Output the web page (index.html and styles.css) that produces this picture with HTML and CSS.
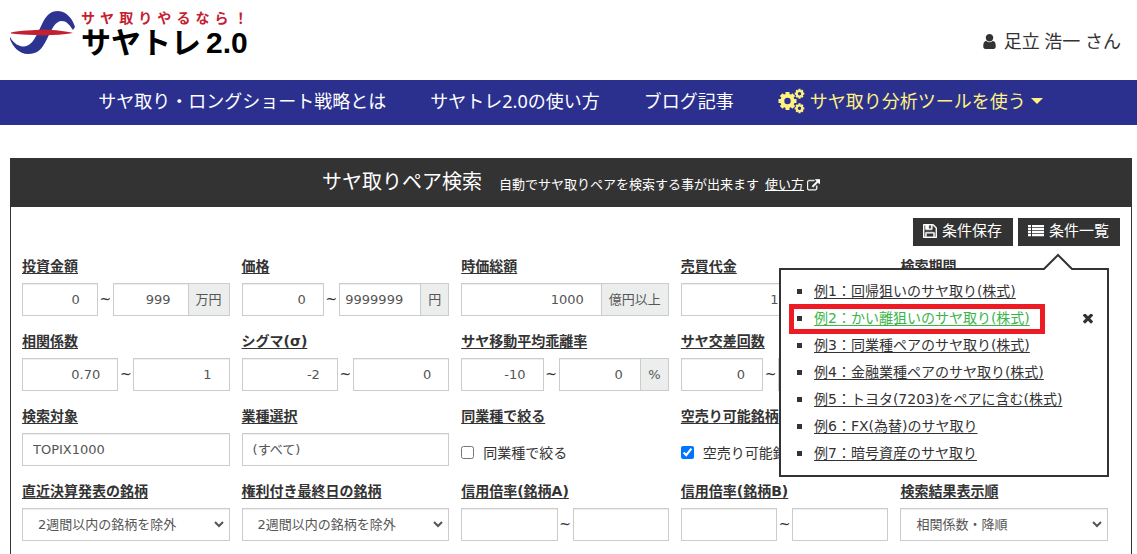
FILE: index.html
```html
<!DOCTYPE html>
<html lang="ja">
<head>
<meta charset="utf-8">
<meta name="viewport" content="width=device-width, initial-scale=1">
<title>サヤトレ2.0</title>
<link rel="stylesheet" href="styles.css">
</head>
<body>
<header class="site-header">
  <a class="logo" href="#">
    <svg class="logo-mark" viewBox="0 0 66 46" aria-hidden="true">
      <path fill="#2d3490" d="M0 27C4 34 9 36.500 14 36.500C23 36.500 28 22 33 12C37 4 42 1 48 1C57 1 63 10 65 17L63 20C59 14 56 11 52 11C45 11 42 19 37 29C32 39 28 44 18 44C9 44 3 37 0 29Z"/>
      <path fill="#c32032" d="M1 22.500C10 20.500 24 20 34 19.500C45 20 56 21 63 23C54 24.500 44 25 34 25.500C22 25 11 24.500 1 23.500Z"/>
    </svg>
    <span class="logo-text">
      <span class="logo-tagline"><span>サ</span><span>ヤ</span><span>取</span><span>り</span><span>や</span><span>る</span><span>な</span><span>ら</span><span>！</span></span>
      <span class="logo-name">サヤトレ<span class="logo-version">2.0</span></span>
    </span>
  </a>
  <div class="user">
    <svg class="icon-user" viewBox="256 128 1280 1536" aria-hidden="true"><path fill="currentColor" d="M1536 1399q0 109-62.500 187t-150.500 78h-854q-88 0-150.500-78t-62.500-187q0-85 8.500-160.500t31.500-152 58.500-131 94-89 134.500-34.500q131 128 313 128t313-128q76 0 134.500 34.500t94 89 58.500 131 31.500 152 8.500 160.500zm-256-887q0 159-112.500 271.500t-271.500 112.500-271.500-112.500-112.500-271.500 112.500-271.500 271.500-112.500 271.500 112.500 112.500 271.500z"/></svg>
    <span>足立 浩一 さん</span>
  </div>
</header>

<nav class="main-nav">
  <a href="#">サヤ取り・ロングショート戦略とは</a>
  <a href="#">サヤトレ2.0の使い方</a>
  <a href="#">ブログ記事</a>
  <a class="nav-tools" href="#">
    <svg class="icon-cogs" viewBox="0 0 27 26" aria-hidden="true">
      <g fill="none" stroke="currentColor">
        <circle cx="9.500" cy="13" r="5.200" stroke-width="4"/>
        <path stroke-width="4" d="M9.500 4v3M9.500 19v3M.5 13h3M15.500 13h3M3.200 6.700l2 2M13.800 17.300l2 2M3.200 19.300l2-2M13.800 8.700l2-2"/>
        <circle cx="21.500" cy="5.700" r="2.700" stroke-width="2"/>
        <path stroke-width="2.200" d="M21.500.7v2M21.500 8.700v2M16.700 5.700h2M24.300 5.700h2M18.200 2.300l1.200 1.200M23.600 7.900l1.200 1.200M18.200 9.100l1.200-1.200M23.600 3.500l1.200-1.200"/>
        <circle cx="21.500" cy="20.300" r="2.700" stroke-width="2"/>
        <path stroke-width="2.200" d="M21.500 15.300v2M21.500 23.300v2M16.700 20.300h2M24.300 20.300h2M18.200 16.900l1.200 1.200M23.600 22.500l1.200 1.200M18.200 23.700l1.200-1.200M23.600 18.100l1.200-1.200"/>
      </g>
    </svg>
    <span>サヤ取り分析ツールを使う</span>
    <span class="caret"></span>
  </a>
</nav>

<main class="panel">
  <div class="panel-head">
    <h1>サヤ取りペア検索</h1>
    <p>自動でサヤ取りペアを検索する事が出来ます</p>
    <a href="#"><span class="help-text">使い方</span><svg class="icon-external" viewBox="0 0 1792 1600" aria-hidden="true"><path fill="currentColor" stroke="currentColor" stroke-width="60" d="M1408 928v320q0 119-84.500 203.500t-203.500 84.500h-832q-119 0-203.500-84.500t-84.500-203.500v-832q0-119 84.500-203.500t203.500-84.500h704q14 0 23 9t9 23v64q0 14-9 23t-23 9h-704q-66 0-113 47t-47 113v832q0 66 47 113t113 47h832q66 0 113-47t47-113v-320q0-14 9-23t23-9h64q14 0 23 9t9 23zm384-864v512q0 26-19 45t-45 19-45-19l-176-176-652 652q-10 10-23 10t-23-10l-114-114q-10-10-10-23t10-23l652-652-176-176q-19-19-19-45t19-45 45-19h512q26 0 45 19t19 45z"/></svg></a>
  </div>

  <div class="toolbar">
    <button type="button" class="tool-button">
      <svg class="icon-save" viewBox="128 128 1536 1536" aria-hidden="true"><path fill="currentColor" stroke="currentColor" stroke-width="50" d="M512 1536h768v-384h-768v384zm896 0h128v-896q0-14-10-38.500t-20-34.500l-281-281q-10-10-34-20t-39-10v416q0 40-28 68t-68 28h-576q-40 0-68-28t-28-68v-416h-128v1280h128v-416q0-40 28-68t68-28h832q40 0 68 28t28 68v416zm-384-928v-320q0-13-9.500-22.500t-22.500-9.500h-192q-13 0-22.500 9.500t-9.500 22.500v320q0 13 9.500 22.500t22.500 9.500h192q13 0 22.500-9.500t9.500-22.500zm640 32v928q0 40-28 68t-68 28h-1344q-40 0-68-28t-28-68v-1344q0-40 28-68t68-28h928q40 0 88 20t76 48l280 280q28 28 48 76t20 88z"/></svg>
      条件保存
    </button>
    <button type="button" class="tool-button">
      <svg class="icon-list" viewBox="0 0 16 12" aria-hidden="true"><path fill="currentColor" d="M0 0h3v2.300H0zM4 0h12v2.300H4zM0 3h3v2.300H0zM4 3h12v2.300H4zM0 6h3v2.300H0zM4 6h12v2.300H4zM0 9h3v2.300H0zM4 9h12v2.300H4z"/></svg>
      条件一覧
    </button>
    <div class="popover">
      <svg class="popover-arrow" viewBox="0 0 30 17" aria-hidden="true"><path fill="#fff" stroke="#333" stroke-width="2" d="M0 17L15 2L30 17"/></svg>
      <ul class="presets">
        <li><a href="#">例1：回帰狙いのサヤ取り(株式)</a></li>
        <li class="is-marked"><a href="#">例2：かい離狙いのサヤ取り(株式)</a><button type="button" class="remove" aria-label="削除"><svg class="icon-times" viewBox="300 430 1192 1192" aria-hidden="true"><path fill="currentColor" d="M1490 1322q0 40-28 68l-136 136q-28 28-68 28t-68-28l-294-294-294 294q-28 28-68 28t-68-28l-136-136q-28-28-28-68t28-68l294-294-294-294q-28-28-28-68t28-68l136-136q28-28 68-28t68 28l294 294 294-294q28-28 68-28t68 28l136 136q28 28 28 68t-28 68l-294 294 294 294q28 28 28 68z"/></svg></button></li>
        <li><a href="#">例3：同業種ペアのサヤ取り(株式)</a></li>
        <li><a href="#">例4：金融業種ペアのサヤ取り(株式)</a></li>
        <li><a href="#">例5：トヨタ(7203)をペアに含む(株式)</a></li>
        <li><a href="#">例6：FX(為替)のサヤ取り</a></li>
        <li><a href="#">例7：暗号資産のサヤ取り</a></li>
      </ul>
    </div>
  </div>

  <form class="fields">
    <div class="field">
      <label for="amount-min">投資金額</label>
      <div class="controls"><input class="num" id="amount-min" type="text" value="0"><span class="tilde">~</span><input class="num" type="text" value="999" aria-label="投資金額 上限"><span class="unit">万円</span></div>
    </div>
    <div class="field">
      <label for="price-min">価格</label>
      <div class="controls"><input class="num" id="price-min" type="text" value="0"><span class="tilde">~</span><input class="num" type="text" value="9999999" aria-label="価格 上限"><span class="unit">円</span></div>
    </div>
    <div class="field">
      <label for="cap">時価総額</label>
      <div class="controls"><input class="num" id="cap" type="text" value="1000"><span class="unit">億円以上</span></div>
    </div>
    <div class="field">
      <label for="turnover">売買代金</label>
      <div class="controls"><input class="num" id="turnover" type="text" value="1000"><span class="unit unit-wide"></span></div>
    </div>
    <div class="field">
      <label for="period">検索期間</label>
      <div class="controls"><input id="period" type="text"></div>
    </div>

    <div class="field">
      <label for="corr-min">相関係数</label>
      <div class="controls"><input class="num" id="corr-min" type="text" value="0.70"><span class="tilde">~</span><input class="num" type="text" value="1" aria-label="相関係数 上限"></div>
    </div>
    <div class="field">
      <label for="sigma-min">シグマ(σ)</label>
      <div class="controls"><input class="num" id="sigma-min" type="text" value="-2"><span class="tilde">~</span><input class="num" type="text" value="0" aria-label="シグマ 上限"></div>
    </div>
    <div class="field">
      <label for="gap-min">サヤ移動平均乖離率</label>
      <div class="controls"><input class="num" id="gap-min" type="text" value="-10"><span class="tilde">~</span><input class="num" type="text" value="0" aria-label="サヤ移動平均乖離率 上限"><span class="unit">%</span></div>
    </div>
    <div class="field">
      <label for="cross-min">サヤ交差回数</label>
      <div class="controls"><input class="num" id="cross-min" type="text" value="0"><span class="tilde">~</span><input class="num" type="text" aria-label="サヤ交差回数 上限"><span class="unit"></span></div>
    </div>
    <div class="field"></div>

    <div class="field">
      <label for="target">検索対象</label>
      <div class="controls"><input id="target" type="text" value="TOPIX1000"></div>
    </div>
    <div class="field">
      <label for="sector">業種選択</label>
      <div class="controls"><input id="sector" type="text" value="(すべて)"></div>
    </div>
    <div class="field">
      <span class="field-title">同業種で絞る</span>
      <div class="controls"><label class="check"><input type="checkbox">同業種で絞る</label></div>
    </div>
    <div class="field">
      <span class="field-title">空売り可能銘柄</span>
      <div class="controls"><label class="check"><input type="checkbox" checked>空売り可能銘柄</label></div>
    </div>
    <div class="field"></div>

    <div class="field">
      <label for="earnings">直近決算発表の銘柄</label>
      <div class="controls"><span class="select"><select id="earnings"><option>2週間以内の銘柄を除外</option></select><svg class="chevron" viewBox="0 0 10 7" aria-hidden="true"><path fill="none" stroke="currentColor" stroke-width="2" d="M1 1l4 4 4-4"/></svg></span></div>
    </div>
    <div class="field">
      <label for="exright">権利付き最終日の銘柄</label>
      <div class="controls"><span class="select"><select id="exright"><option>2週間以内の銘柄を除外</option></select><svg class="chevron" viewBox="0 0 10 7" aria-hidden="true"><path fill="none" stroke="currentColor" stroke-width="2" d="M1 1l4 4 4-4"/></svg></span></div>
    </div>
    <div class="field">
      <label for="margin-a">信用倍率(銘柄A)</label>
      <div class="controls"><input class="num" id="margin-a" type="text"><span class="tilde">~</span><input class="num" type="text" aria-label="信用倍率(銘柄A) 上限"></div>
    </div>
    <div class="field">
      <label for="margin-b">信用倍率(銘柄B)</label>
      <div class="controls"><input class="num" id="margin-b" type="text"><span class="tilde">~</span><input class="num" type="text" aria-label="信用倍率(銘柄B) 上限"></div>
    </div>
    <div class="field">
      <label for="order">検索結果表示順</label>
      <div class="controls"><span class="select"><select id="order"><option>相関係数・降順</option></select><svg class="chevron" viewBox="0 0 10 7" aria-hidden="true"><path fill="none" stroke="currentColor" stroke-width="2" d="M1 1l4 4 4-4"/></svg></span></div>
    </div>
  </form>
</main>
</body>
</html>
```
FILE: styles.css
```css
*,
*::before,
*::after {
  box-sizing: border-box;
}

html {
  overflow: hidden;
}

body {
  margin: 0;
  background: #fff;
  color: #333;
  font-family: "DejaVu Sans", "Noto Sans CJK JP", sans-serif;
  font-size: 14px;
  line-height: 20px;
}

input,
select,
button {
  font: inherit;
  color: inherit;
  margin: 0;
}

svg {
  flex: none;
  display: block;
}

/* Header */
.site-header {
  display: flex;
  justify-content: space-between;
  min-height: 80px;
  padding: 10px 16px 0 10px;
}

.logo {
  display: flex;
  align-items: flex-start;
  gap: 5px;
  color: #000;
  text-decoration: none;
  font-weight: bold;
}

.logo-mark {
  width: 66px;
  height: 46px;
}

.logo-text {
  display: flex;
  flex-direction: column;
}

.logo-tagline {
  display: flex;
  justify-content: space-between;
  color: #c32032;
  font-family: "Noto Sans CJK JP", sans-serif;
  font-size: 14px;
  line-height: 14px;
}

.logo-name {
  display: flex;
  align-items: baseline;
  gap: 5px;
  font-family: "Noto Sans CJK JP", sans-serif;
  font-size: 30px;
  line-height: 32px;
}

.logo-version {
  font-family: "Liberation Sans", Arial, sans-serif;
}

.user {
  display: flex;
  align-items: center;
  gap: 8px;
  height: 62px;
  font-family: "Noto Sans", "Noto Sans CJK JP", sans-serif;
  font-size: 18px;
  line-height: 24px;
}

.icon-user {
  width: 13px;
  height: 15px;
}

/* Navigation */
.main-nav {
  display: flex;
  justify-content: center;
  align-items: center;
  gap: 44px;
  height: 45px;
  padding: 0 0 3px 4px;
  background: #2b308f;
  font-family: "Noto Sans", "Noto Sans CJK JP", sans-serif;
  font-size: 18px;
  line-height: 24px;
  white-space: nowrap;
}

.main-nav a {
  color: #fff;
  text-decoration: none;
}

.main-nav .nav-tools {
  display: flex;
  align-items: center;
  gap: 5px;
  color: #fff280;
}

.icon-cogs {
  width: 27px;
  height: 26px;
}

.caret {
  border: 6px solid transparent;
  border-top-color: currentColor;
  border-bottom: 0;
}

/* Search panel */
.panel {
  margin: 33px 5px 0 10px;
  border: 1px solid #333;
}

.panel-head {
  display: flex;
  justify-content: center;
  align-items: baseline;
  padding: 8px 0 7px;
  background: #333;
  color: #fff;
  font-size: 13px;
  line-height: 30px;
}

.panel-head h1 {
  margin: 0 17px 0 0;
  font-size: 20px;
  font-weight: normal;
  line-height: 30px;
}

.panel-head p {
  margin: 0 6px 0 0;
}

.panel-head a {
  display: flex;
  align-items: center;
  gap: 3px;
  color: #fff;
  text-decoration: none;
}

.help-text {
  text-decoration: underline;
}

.icon-external {
  width: 13px;
  height: 12px;
}

.toolbar {
  position: relative;
  display: flex;
  justify-content: flex-end;
  gap: 5px;
  padding: 11px 11px 0;
}

.tool-button {
  display: flex;
  align-items: center;
  gap: 5px;
  height: 28px;
  padding: 0 11px 2px 10px;
  border: 0;
  background: #333;
  color: #fff;
  font-size: 15px;
}

.icon-save {
  width: 14px;
  height: 14px;
}

.icon-list {
  width: 16px;
  height: 12px;
}

/* Saved-condition popover */
.popover {
  position: absolute;
  top: 61px;
  right: 22px;
  z-index: 1;
  width: 330px;
  padding: 8px 8px 8px;
  border: 2px solid #333;
  background: #fff;
}

.popover-arrow {
  position: absolute;
  top: -17px;
  right: 34px;
  width: 30px;
  height: 17px;
}

.presets {
  margin: 0;
  padding: 0;
  list-style: none;
}

.presets li {
  position: relative;
  display: flex;
  align-items: center;
  gap: 12px;
  padding-left: 8px;
  line-height: 27px;
}

.presets li::before {
  content: "";
  width: 5px;
  height: 5px;
  background: #333;
}

.presets a {
  color: #333;
  text-underline-offset: 2px;
}

.presets .is-marked a {
  color: #39b54a;
}

.presets .is-marked::after {
  content: "";
  position: absolute;
  top: -1px;
  left: 0;
  width: 256px;
  height: 30px;
  border: 5px solid #ed1c24;
  pointer-events: none;
}

.remove {
  margin-left: auto;
  padding: 0 6px;
  border: 0;
  background: none;
}

.icon-times {
  width: 10px;
  height: 10px;
}

/* Form grid */
.fields {
  display: grid;
  grid-template-columns: repeat(5, minmax(0, 1fr));
  gap: 15px 12px;
  padding: 10px 23px 20px 11px;
}

.field > label,
.field-title {
  display: block;
  margin-bottom: 7px;
  font-weight: bold;
  text-decoration: underline;
  text-underline-offset: 2px;
  white-space: nowrap;
}

.controls {
  display: flex;
  height: 33px;
  color: #555;
  font-size: 13px;
}

.controls input[type="text"] {
  flex: 1 1 0;
  min-width: 0;
  padding: 0 10px;
  border: 1px solid #ccc;
  background: #fff;
  box-shadow: inset 0 1px 1px #eee;
}

.controls input.num[type="text"] {
  padding: 0 17px 0 0;
  text-align: right;
}

.tilde {
  flex: none;
  width: 15px;
  color: #333;
  font-size: 14px;
  line-height: 33px;
  text-align: center;
}

.unit {
  flex: none;
  padding: 0 7px;
  border: 1px solid #ccc;
  border-left: 0;
  background: #eceeee;
  line-height: 31px;
  min-width: 28px;
  text-align: center;
}

.unit-wide {
  width: 67px;
}

.check {
  display: flex;
  align-items: center;
  gap: 9px;
  padding-top: 6px;
  color: #333;
  font-size: 14px;
  white-space: nowrap;
}

.check input {
  width: 13px;
  height: 13px;
}

.select {
  position: relative;
  flex: 1 1 0;
  display: flex;
  min-width: 0;
}

.select select {
  flex: 1 1 0;
  min-width: 0;
  padding: 0 24px 0 15px;
  border: 1px solid #ccc;
  background: #fff;
  box-shadow: inset 0 1px 1px #eee;
  appearance: none;
}

.chevron {
  position: absolute;
  top: 13px;
  right: 6px;
  width: 10px;
  height: 7px;
  pointer-events: none;
}
```
